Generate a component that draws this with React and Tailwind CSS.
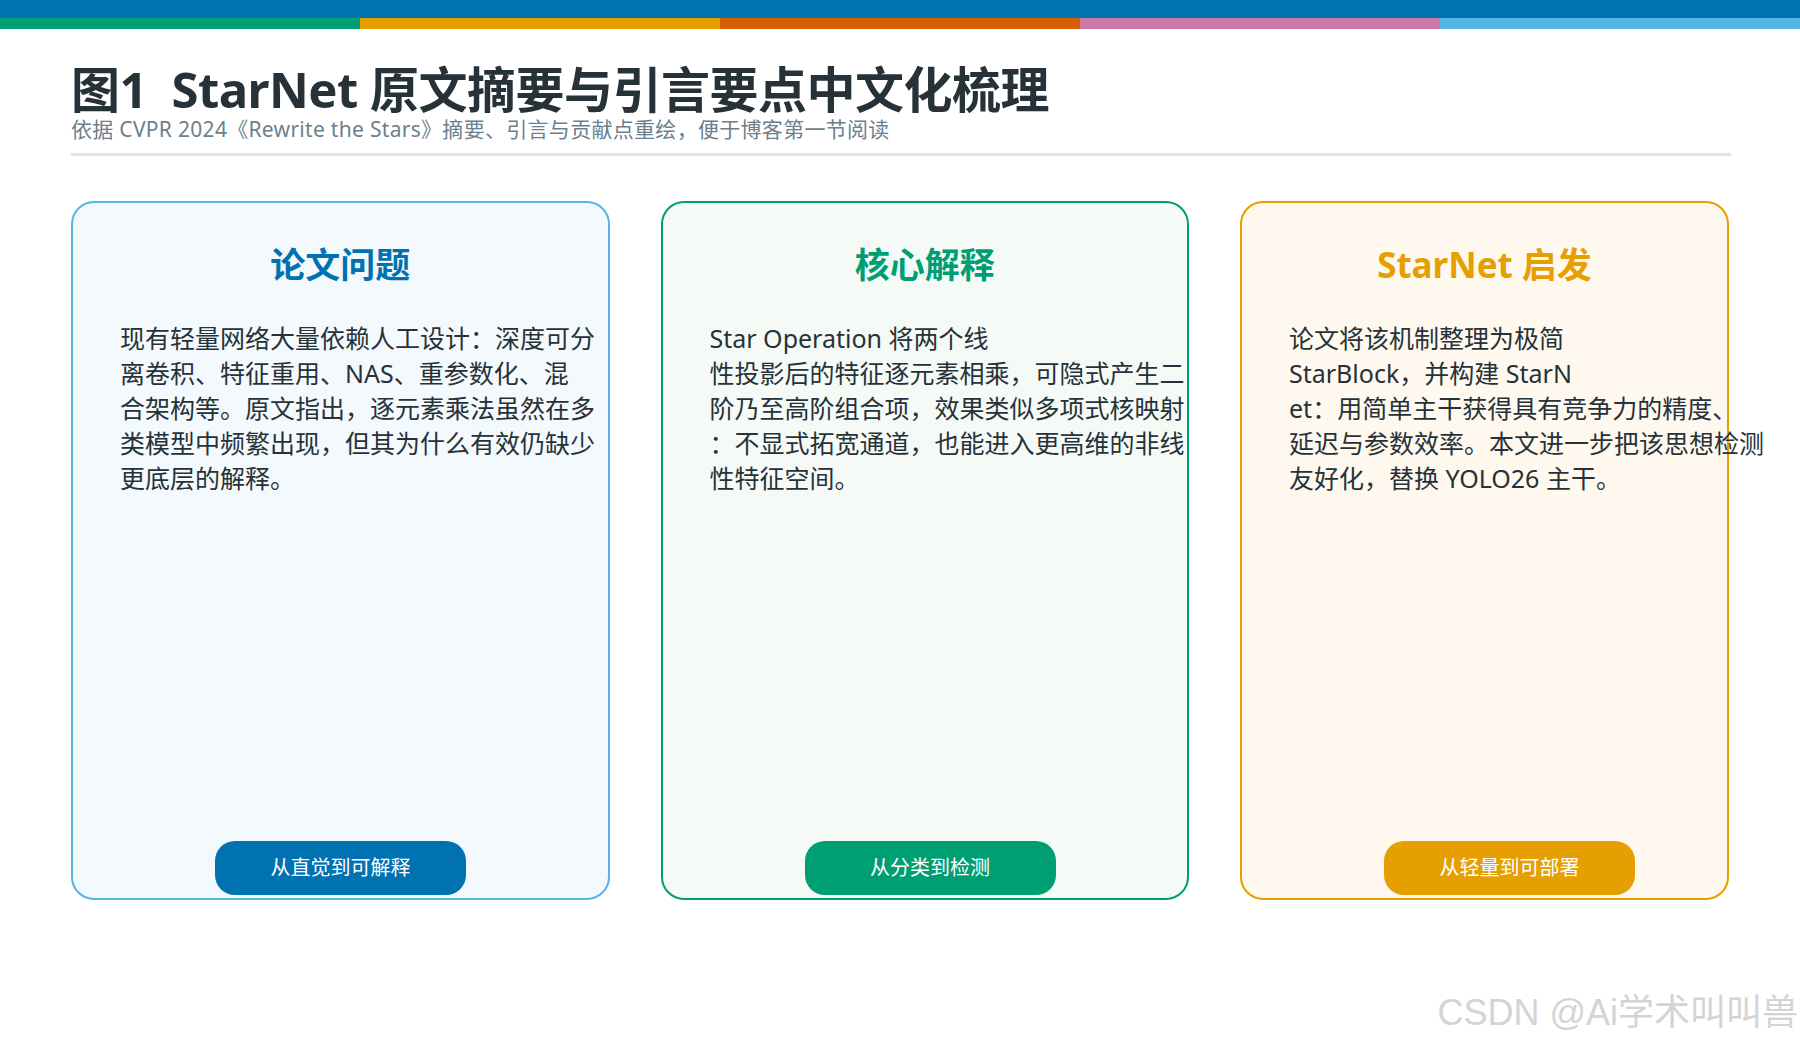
export default function App() {
  const font = { fontFamily: '"Noto Sans", "Noto Sans CJK SC", sans-serif' };
  const cards = [
    {
      w: 'w-[539px]', border: 'border-[#56b4e9]', bg: 'bg-[#f4f9fd]', tc: 'text-[#0072b2]', btn: 'bg-[#0072b2]', bml: 'ml-[142px]',
      title: '论文问题', button: '从直觉到可解释',
      lines: ['现有轻量网络大量依赖人工设计：深度可分', '离卷积、特征重用、NAS、重参数化、混', '合架构等。原文指出，逐元素乘法虽然在多', '类模型中频繁出现，但其为什么有效仍缺少', '更底层的解释。'],
    },
    {
      w: 'w-[529px]', border: 'border-[#009e73]', bg: 'bg-[#f5faf7]', tc: 'text-[#009e73]', btn: 'bg-[#009e73]', bml: 'ml-[142px]',
      title: '核心解释', button: '从分类到检测',
      lines: ['Star Operation 将两个线', '性投影后的特征逐元素相乘，可隐式产生二', '阶乃至高阶组合项，效果类似多项式核映射', '：不显式拓宽通道，也能进入更高维的非线', '性特征空间。'],
    },
    {
      w: 'w-[489px]', border: 'border-[#e69f00]', bg: 'bg-[#fef8ee]', tc: 'text-[#e69f00]', btn: 'bg-[#e69f00]', bml: 'ml-[142px]',
      title: 'StarNet 启发', button: '从轻量到可部署',
      lines: ['论文将该机制整理为极简', 'StarBlock，并构建 StarN', 'et：用简单主干获得具有竞争力的精度、', '延迟与参数效率。本文进一步把该思想检测', '友好化，替换 YOLO26 主干。'],
    },
  ];
  return (
    <div className="w-[1800px] h-[1050px] bg-white relative overflow-hidden" style={font}>
      <div className="h-[18px] bg-[#0072b2]" />
      <div className="flex h-[11px]">
        <div className="flex-1 bg-[#009e73]" />
        <div className="flex-1 bg-[#e69f00]" />
        <div className="flex-1 bg-[#d55e00]" />
        <div className="flex-1 bg-[#cc79a7]" />
        <div className="flex-1 bg-[#56b4e9]" />
      </div>
      <div className="px-[71px] pt-[33px]">
        <div className="text-[49px] leading-[55px] font-bold text-[#263238] tracking-[-0.5px]">图1&nbsp; StarNet 原文摘要与引言要点中文化梳理</div>
        <div className="text-[21px] leading-[24px] text-[#6b7f8c] tracking-[0.3px]">依据 CVPR 2024《Rewrite the Stars》摘要、引言与贡献点重绘，便于博客第一节阅读</div>
        <div className="mt-[12px] h-[3px] bg-[#dbe3ec] w-[1660px]" />
        <div className="flex gap-[51px] mt-[45px]">
          {cards.map((c) => (
            <div key={c.title} className={`${c.w} h-[699px] border-2 ${c.border} ${c.bg} rounded-[23px] flex flex-col`}>
              <div className={`mt-[41px] text-center text-[35px] leading-[42px] font-bold ${c.tc}`}>{c.title}</div>
              <div className="mt-[35px] pl-[47px] text-[25px] leading-[35px] text-[#263238] whitespace-nowrap">
                {c.lines.map((l, i) => (<div key={i}>{l}</div>))}
              </div>
              <div className={`mt-auto mb-[3px] ${c.bml} w-[251px] h-[54px] rounded-[20px] ${c.btn} text-white text-[20px] flex items-center justify-center`}>{c.button}</div>
            </div>
          ))}
        </div>
      </div>
      <div className="absolute right-[2px] bottom-[10px] text-[36px] text-[#d4d4d4]" style={{ fontFamily: '"Liberation Sans", "Noto Sans CJK SC", sans-serif' }}>CSDN @Ai学术叫叫兽</div>
    </div>
  );
}
